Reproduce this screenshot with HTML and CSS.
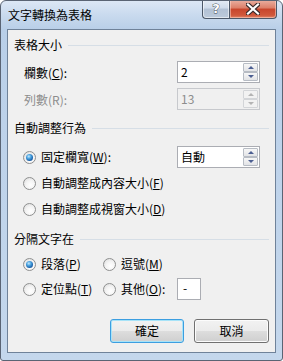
FILE: index.html
```html
<!DOCTYPE html>
<html lang="zh-Hant">
<head>
    <meta charset="utf-8" />
    <title>文字轉換為表格</title>
    <link rel="stylesheet" href="styles.css">
</head>
<body>
    <!-- Dialog window -->
    <div class="window">

        <!-- Title bar -->
        <div class="titlebar">
            <span class="title">文字轉換為表格</span>
            <div class="capButtons">
                <div class="capBtn help">?</div>
                <div class="capBtn close">
                    <svg width="14" height="12" viewBox="0 0 14 12">
                        <path d="M2 1.5 L12 10.5 M12 1.5 L2 10.5" stroke="#3b2a2a" stroke-width="4.4" stroke-linecap="square" />
                        <path d="M2 1.5 L12 10.5 M12 1.5 L2 10.5" stroke="#ffffff" stroke-width="2.2" stroke-linecap="square" />
                    </svg>
                </div>
            </div>
        </div>

        <!-- Client area -->
        <div class="client">

            <!-- Table size -->
            <div class="groupHead"><span>表格大小</span><i class="rule"></i></div>
            <div class="fieldRow first">
                <span class="label">欄數(<u>C</u>):</span>
                <div class="spin">
                    <span class="spinValue">2</span>
                    <div class="spinBtns"><b class="up"></b><b class="down"></b></div>
                </div>
            </div>
            <div class="fieldRow second disabled">
                <span class="label">列數(R):</span>
                <div class="spin">
                    <span class="spinValue">13</span>
                    <div class="spinBtns"><b class="up"></b><b class="down"></b></div>
                </div>
            </div>

            <!-- Autofit behaviour -->
            <div class="groupHead head2"><span>自動調整行為</span><i class="rule"></i></div>
            <div class="radioRow fixed">
                <span class="option"><i class="radio checked"></i>固定欄寬(<u>W</u>):</span>
                <div class="spin">
                    <span class="spinValue">自動</span>
                    <div class="spinBtns"><b class="up"></b><b class="down"></b></div>
                </div>
            </div>
            <div class="radioRow plain r2">
                <span class="option"><i class="radio"></i>自動調整成內容大小(<u>F</u>)</span>
            </div>
            <div class="radioRow plain r3">
                <span class="option"><i class="radio"></i>自動調整成視窗大小(<u>D</u>)</span>
            </div>

            <!-- Separate text at -->
            <div class="groupHead head3"><span>分隔文字在</span><i class="rule"></i></div>
            <div class="sepRow s1">
                <span class="option"><i class="radio checked"></i>段落(<u>P</u>)</span>
                <span class="option"><i class="radio"></i>逗號(<u>M</u>)</span>
            </div>
            <div class="sepRow s2">
                <span class="option"><i class="radio"></i>定位點(<u>T</u>)</span>
                <span class="option"><i class="radio"></i>其他(<u>O</u>):</span>
                <div class="textbox">-</div>
            </div>

            <!-- OK / Cancel -->
            <div class="buttons">
                <div class="btn default">確定</div>
                <div class="btn">取消</div>
            </div>
        </div>
    </div>
</body>
</html>
```

FILE: styles.css
```css
body {
    margin: 0;
    padding: 0;
    background: #ffffff;
    font-family: "Noto Sans CJK TC", "Liberation Sans", sans-serif;
    font-size: 12px;
    color: #000000;
}

.window {
    width: 283px;
    height: 361px;
    box-sizing: border-box;
    border: 1px solid #5a6474;
    border-radius: 6px 6px 3px 3px;
    background: linear-gradient(#dce7f5 0px, #c9daee 14px, #b9cfe8 28px, #bdd2ea 120px, #c4d7ec 361px);
    display: flex;
    flex-direction: column;
    overflow: hidden;
}

/* Title bar */
.titlebar {
    height: 28px;
    display: flex;
    align-items: flex-start;
}

.title {
    padding-left: 7px;
    line-height: 16px;
    margin-top: 6px;
    color: #000000;
}

.capButtons {
    margin-left: auto;
    margin-right: 5px;
    margin-top: -1px;
    display: flex;
}

.capBtn {
    height: 19px;
    box-sizing: border-box;
    border: 1px solid #4c5868;
    border-top: none;
    display: flex;
    align-items: center;
    justify-content: center;
}

.help {
    width: 27px;
    border-right: none;
    border-radius: 0 0 0 4px;
    background: linear-gradient(#e5ecf5 0%, #cfdbea 45%, #b2c1d4 50%, #bccadb 100%);
    box-shadow: inset 0 0 0 1px rgba(255, 255, 255, 0.55);
    color: #ffffff;
    font-family: "DejaVu Sans", sans-serif;
    font-weight: bold;
    font-size: 13px;
    line-height: 16px;
    -webkit-text-stroke: 0.8px #3d4550;
    paint-order: stroke fill;
}

.close {
    width: 48px;
    border-radius: 0 0 4px 0;
    background: linear-gradient(#eab0a2 0%, #dc7e68 45%, #c8452c 50%, #d0583b 85%, #e0866a 100%);
    box-shadow: inset 0 0 0 1px rgba(255, 220, 210, 0.5);
}

/* Client area */
.client {
    flex: 1;
    margin: 0 6px 7px 6px;
    border: 1px solid #6f8299;
    background: #f0f0f0;
    padding: 7px 6px 0 6px;
}

.groupHead {
    height: 16px;
    display: flex;
    align-items: center;
    gap: 6px;
    line-height: 16px;
}

.rule {
    flex: 1;
    height: 1px;
    background: #d6dee6;
}

.head2 { margin-top: 10px; }
.head3 { margin-top: 14px; }

.fieldRow {
    height: 22px;
    display: grid;
    grid-template-columns: 153px 83px;
    align-items: center;
    padding-left: 10px;
}

.fieldRow.first { margin-top: 8px; }
.fieldRow.second { margin-top: 5px; }

.disabled .label { color: #8d8d8d; }

/* Spin box */
.spin {
    height: 22px;
    box-sizing: border-box;
    border: 1px solid #abadb3;
    background: #ffffff;
    display: flex;
    align-items: center;
}

.spinValue {
    flex: 1;
    padding-left: 3px;
    line-height: 16px;
}

.spinBtns {
    width: 15px;
    margin-right: 1px;
    display: flex;
    flex-direction: column;
}

.spinBtns b {
    height: 9px;
    box-sizing: border-box;
    border: 1px solid #b7bcc4;
    border-radius: 1px;
    background: linear-gradient(#f7f7f7, #e2e3e6);
    display: flex;
    align-items: center;
    justify-content: center;
}

.spinBtns b::after {
    content: "";
    width: 0;
    height: 0;
    border-left: 3px solid transparent;
    border-right: 3px solid transparent;
}

.spinBtns .up::after { border-bottom: 3px solid #4c5f92; }
.spinBtns .down::after { border-top: 3px solid #4c5f92; }

.disabled .spin {
    background: #f0f0f0;
    border-color: #c7c9cd;
}

.disabled .spinValue { color: #8d8d8d; }
.disabled .spinBtns b { border-color: #d3d5d8; background: #f2f2f2; }
.disabled .spinBtns .up::after { border-bottom-color: #b4b4b4; }
.disabled .spinBtns .down::after { border-top-color: #b4b4b4; }

/* Radio options */
.option {
    display: flex;
    align-items: center;
    line-height: 16px;
    white-space: nowrap;
}

.radio {
    width: 13px;
    height: 13px;
    box-sizing: border-box;
    border-radius: 50%;
    border: 1px solid #8e8f8f;
    background: radial-gradient(circle at 60% 65%, #ffffff 0%, #f4f4f4 45%, #d8d8d8 100%);
    margin-right: 5px;
    display: flex;
    align-items: center;
    justify-content: center;
}

.radio.checked::after {
    content: "";
    width: 7px;
    height: 7px;
    border-radius: 50%;
    background: radial-gradient(circle at 40% 35%, #c4e8fc 0%, #4aa3e0 35%, #1a5fa8 70%, #0f3d78 100%);
}

.radioRow {
    display: grid;
    align-items: center;
    padding-left: 9px;
}

.radioRow.fixed {
    height: 22px;
    margin-top: 10px;
    grid-template-columns: 154px 83px;
}

.radioRow.plain { height: 16px; }
.radioRow.r2 { margin-top: 7px; }
.radioRow.r3 { margin-top: 10px; }

.sepRow {
    display: grid;
    grid-template-columns: 80px 74px 24px;
    align-items: center;
    padding-left: 9px;
}

.sepRow.s1 { height: 16px; margin-top: 9px; }
.sepRow.s2 { height: 22px; margin-top: 6px; }

.textbox {
    height: 22px;
    box-sizing: border-box;
    border: 1px solid #abadb3;
    background: #ffffff;
    padding-left: 5px;
    line-height: 18px;
}

/* Bottom buttons */
.buttons {
    margin-top: 19px;
    display: flex;
    justify-content: flex-end;
    gap: 10px;
}

.btn {
    width: 75px;
    height: 24px;
    box-sizing: border-box;
    border: 1px solid #707070;
    border-radius: 3px;
    background: linear-gradient(#f2f2f2 0%, #ebebeb 50%, #dddddd 51%, #cfcfcf 100%);
    box-shadow: inset 0 0 0 1px #fcfcfc;
    display: flex;
    align-items: center;
    justify-content: center;
    line-height: 16px;
}

.btn.default {
    width: 74px;
    border-color: #3c9ee0;
    box-shadow: inset 0 0 0 1px #a7e3f8;
}
```
